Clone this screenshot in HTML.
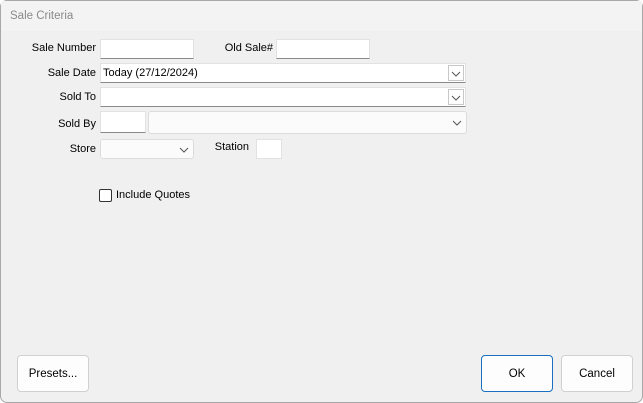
<!DOCTYPE html>
<html><head><style>
*{box-sizing:border-box;margin:0;padding:0}
body{width:643px;height:403px;background:#fff;font-family:"Liberation Sans",sans-serif;font-size:11px;color:#000;position:relative;overflow:hidden}
.win{position:absolute;left:0;top:0;width:643px;height:403px;box-shadow:inset 0 0 0 1px #a8a8a8;border-radius:7px;background:#f0f0f0;overflow:hidden}
.title{position:absolute;left:1px;top:1px;width:641px;height:30px;background:#f3f3f3;color:#8a8a8a;font-size:11.5px;padding:9px 0 0 9px}
.a{position:absolute}
.lbl{position:absolute;text-align:right;width:120px;white-space:nowrap}
.inp{position:absolute;background:#fff;border:1px solid #e2e2e2;border-bottom:1px solid #8a8a8a}
.cb{position:absolute;background:#fff;border:1px solid #e2e2e2;border-bottom:1px solid #8a8a8a;padding:3px 2px}
.dd{position:absolute;right:1px;top:1px;width:16px;height:16px;border:1px solid #c8c8c8;background:#fff}
.cmb{position:absolute;background:#fbfbfb;border:1px solid #dcdcdc;border-radius:3px}
.btn{position:absolute;background:#fdfdfd;border:1px solid #d0d0d0;border-radius:4px;text-align:center;line-height:36px;font-size:11.5px}
</style></head><body>
<div class="win">
<div class="title">Sale Criteria</div>
<div class="lbl" style="left:-24px;top:42px">Sale Number</div>
<div class="inp" style="left:100px;top:39px;width:94px;height:20px"></div>
<div class="lbl" style="left:153px;top:42px">Old Sale#</div>
<div class="inp" style="left:276px;top:39px;width:94px;height:20px"></div>
<div class="lbl" style="left:-24px;top:67px">Sale Date</div>
<div class="cb" style="left:100px;top:63px;width:366px;height:20px">Today (27/12/2024)<div class="dd"><svg width="14" height="14" style="position:absolute;left:0;top:0"><path d="M3 6l4 4 4-4" fill="none" stroke="#555" stroke-width="1"/></svg></div></div>
<div class="lbl" style="left:-24px;top:91px">Sold To</div>
<div class="cb" style="left:100px;top:87px;width:366px;height:20px"><div class="dd"><svg width="14" height="14" style="position:absolute;left:0;top:0"><path d="M3 6l4 4 4-4" fill="none" stroke="#555" stroke-width="1"/></svg></div></div>
<div class="lbl" style="left:-24px;top:118px">Sold By</div>
<div class="inp" style="left:100px;top:111px;width:46px;height:22px"></div>
<div class="cmb" style="left:148px;top:111px;width:319px;height:23px"><svg width="14" height="14" style="position:absolute;right:2px;top:4px"><path d="M3 5l4 4 4-4" fill="none" stroke="#555" stroke-width="1"/></svg></div>
<div class="lbl" style="left:-24px;top:143px">Store</div>
<div class="cmb" style="left:100px;top:139px;width:94px;height:20px"><svg width="14" height="14" style="position:absolute;right:2px;top:3px"><path d="M3 5l4 4 4-4" fill="none" stroke="#555" stroke-width="1"/></svg></div>
<div class="lbl" style="left:129px;top:141px">Station</div>
<div class="inp" style="left:256px;top:139px;width:26px;height:20px;border-bottom-color:#e2e2e2"></div>
<div class="a" style="left:99px;top:189px;width:13px;height:13px;border:1px solid #333;border-radius:2px;background:#fff"></div>
<div class="a" style="left:116px;top:189px">Include Quotes</div>
<div class="btn" style="left:17px;top:355px;width:72px;height:37px">Presets...</div>
<div class="btn" style="left:481px;top:355px;width:72px;height:37px;border:1px solid #1a6fc0">OK</div>
<div class="btn" style="left:561px;top:355px;width:72px;height:37px">Cancel</div>
</div>
</body></html>
